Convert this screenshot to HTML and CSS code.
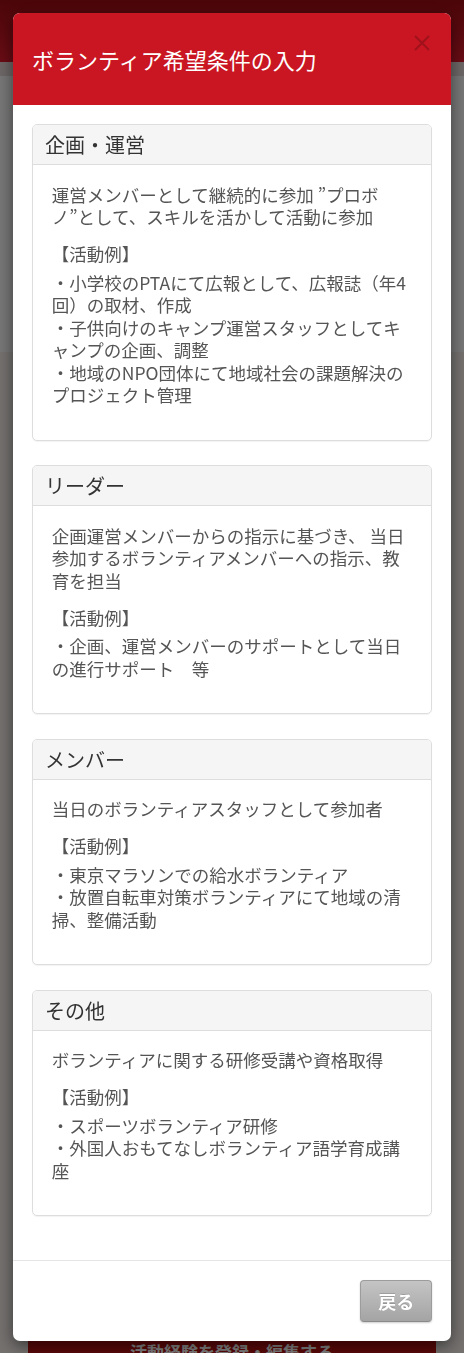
FILE: index.html
```html
<!DOCTYPE html>
<html lang="ja">
<head>
    <meta charset="UTF-8">
    <meta name="viewport" content="width=device-width, initial-scale=1.0">
    <title>ボランティア希望条件の入力</title>
    <link rel="stylesheet" href="styles.css">
</head>
<body>
    <div class="page">
        <header class="site-header">
            <svg class="logo" width="14" height="12" viewBox="0 0 14 12">
                <path d="M5 1 C2 3 2 7 3 10" stroke="#fff" stroke-width="2" fill="none"/>
                <path d="M11 1 C8 3 8 7 9 10" stroke="#fff" stroke-width="2" fill="none"/>
            </svg>
        </header>
        <div class="sub-band"></div>
        <div class="page-section"></div>
        <div class="page-section alt">
            <a class="btn-register" href="#">活動経験を登録・編集する</a>
        </div>
    </div>

    <div class="modal-backdrop"></div>

    <div class="modal">
        <div class="modal-header">
            <h4 class="modal-title">ボランティア希望条件の入力</h4>
            <button class="modal-close" type="button">
                <svg width="20" height="20" viewBox="0 0 20 20">
                    <path d="M3 3 L17 17 M17 3 L3 17" stroke="#a0121b" stroke-width="2" fill="none"/>
                </svg>
            </button>
        </div>
        <div class="modal-body">
            <div class="panel">
                <div class="panel-heading"><h3 class="panel-title">企画・運営</h3></div>
                <div class="panel-body">
                    <p class="lead-text">運営メンバーとして継続的に参加 ”プロボノ”として、スキルを活かして活動に参加</p>
                    <p class="example-label">【活動例】</p>
                    <ul class="example-list">
                        <li>・小学校のPTAにて広報として、広報誌（年4回）の取材、作成</li>
                        <li>・子供向けのキャンプ運営スタッフとしてキャンプの企画、調整</li>
                        <li>・地域のNPO団体にて地域社会の課題解決のプロジェクト管理</li>
                    </ul>
                </div>
            </div>
            <div class="panel">
                <div class="panel-heading"><h3 class="panel-title">リーダー</h3></div>
                <div class="panel-body">
                    <p class="lead-text">企画運営メンバーからの指示に基づき、 当日参加するボランティアメンバーへの指示、教育を担当</p>
                    <p class="example-label">【活動例】</p>
                    <ul class="example-list">
                        <li>・企画、運営メンバーのサポートとして当日の進行サポート　等</li>
                    </ul>
                </div>
            </div>
            <div class="panel">
                <div class="panel-heading"><h3 class="panel-title">メンバー</h3></div>
                <div class="panel-body">
                    <p class="lead-text">当日のボランティアスタッフとして参加者</p>
                    <p class="example-label">【活動例】</p>
                    <ul class="example-list">
                        <li>・東京マラソンでの給水ボランティア</li>
                        <li>・放置自転車対策ボランティアにて地域の清掃、整備活動</li>
                    </ul>
                </div>
            </div>
            <div class="panel">
                <div class="panel-heading"><h3 class="panel-title">その他</h3></div>
                <div class="panel-body">
                    <p class="lead-text">ボランティアに関する研修受講や資格取得</p>
                    <p class="example-label">【活動例】</p>
                    <ul class="example-list">
                        <li>・スポーツボランティア研修</li>
                        <li>・外国人おもてなしボランティア語学育成講座</li>
                    </ul>
                </div>
            </div>
        </div>
        <div class="modal-footer">
            <button class="btn-back" type="button">戻る</button>
        </div>
    </div>
</body>
</html>
```

FILE: styles.css
```css
* {
    box-sizing: border-box;
}
body {
    margin: 0;
    font-family: "Noto Sans CJK JP", "Noto Sans", sans-serif;
    background: #eee;
}
ul, li {
    list-style: none;
}

/* 背景のページ */
.page {
    height: 1353px;
    overflow: hidden;
    display: flex;
    flex-direction: column;
}
.site-header {
    height: 62px;
    padding: 6px 0 0 24px;
    background: linear-gradient(#960c12, #d4182a);
}
.logo {
    opacity: .7;
}
.sub-band {
    height: 14px;
    background: #dacfcd;
}
.page-section {
    height: 276px;
    background: #eeeeee;
}
.page-section.alt {
    flex: 1;
    display: flex;
    flex-direction: column;
    justify-content: flex-end;
    padding: 0 28px;
    background: #e8e2de;
}
.btn-register {
    display: block;
    height: 44px;
    margin-bottom: -21px;
    line-height: 44px;
    text-align: center;
    font-size: 17px;
    font-weight: bold;
    color: #fff;
    text-decoration: none;
    background: #b41010;
}

/* モーダル */
.modal-backdrop {
    position: fixed;
    top: 0;
    right: 0;
    bottom: 0;
    left: 0;
    background: rgba(0, 0, 0, .5);
}
.modal {
    position: fixed;
    top: 13px;
    left: 13px;
    width: 438px;
    background: #fff;
    border-radius: 7px;
    box-shadow: 0 5px 16px rgba(0, 0, 0, .5);
    overflow: hidden;
}
.modal-header {
    display: flex;
    align-items: center;
    justify-content: space-between;
    height: 92px;
    padding: 0 19px;
    background: #c91622;
}
.modal-title {
    margin: 0;
    font-size: 22px;
    font-weight: normal;
    line-height: 30px;
    color: #fff;
}
.modal-close {
    align-self: flex-start;
    width: 20px;
    height: 20px;
    margin-top: 20px;
    padding: 0;
    border: 0;
    background: none;
}
.modal-close svg {
    display: block;
}
.modal-body {
    padding: 19px 19px 19.5px;
}
.panel {
    margin-bottom: 24.5px;
    border: 1px solid #ddd;
    border-radius: 5px;
    box-shadow: 0 1px 1px rgba(0, 0, 0, .05);
}
.panel-heading {
    padding: 7px 12px;
    background: #f5f5f5;
    border-bottom: 1px solid #ddd;
    border-radius: 4px 4px 0 0;
}
.panel-title {
    margin: 0;
    font-size: 20px;
    font-weight: normal;
    line-height: 25px;
    color: #333;
}
.panel-body {
    padding: 18.75px;
    font-size: 17.5px;
    line-height: 22.5px;
    color: #555;
}
.lead-text {
    margin: 0 0 14.5px;
}
.example-label {
    margin: 0 0 6px;
}
.example-list {
    margin: 0 0 14px;
    padding: 0;
}
.modal-footer {
    display: flex;
    justify-content: flex-end;
    padding: 18.75px;
    border-top: 1px solid #e5e5e5;
}
.btn-back {
    width: 72px;
    height: 42px;
    padding: 0;
    font-family: inherit;
    font-size: 18px;
    font-weight: bold;
    color: #fff;
    text-shadow: 0 -1px 0 rgba(0, 0, 0, .15);
    background: linear-gradient(#c4c4c4, #a4a4a4);
    border: 1px solid #9c9c9c;
    border-bottom-color: #8a8a8a;
    border-radius: 4px;
    box-shadow: 0 1px 2px rgba(0, 0, 0, .2);
}
```
